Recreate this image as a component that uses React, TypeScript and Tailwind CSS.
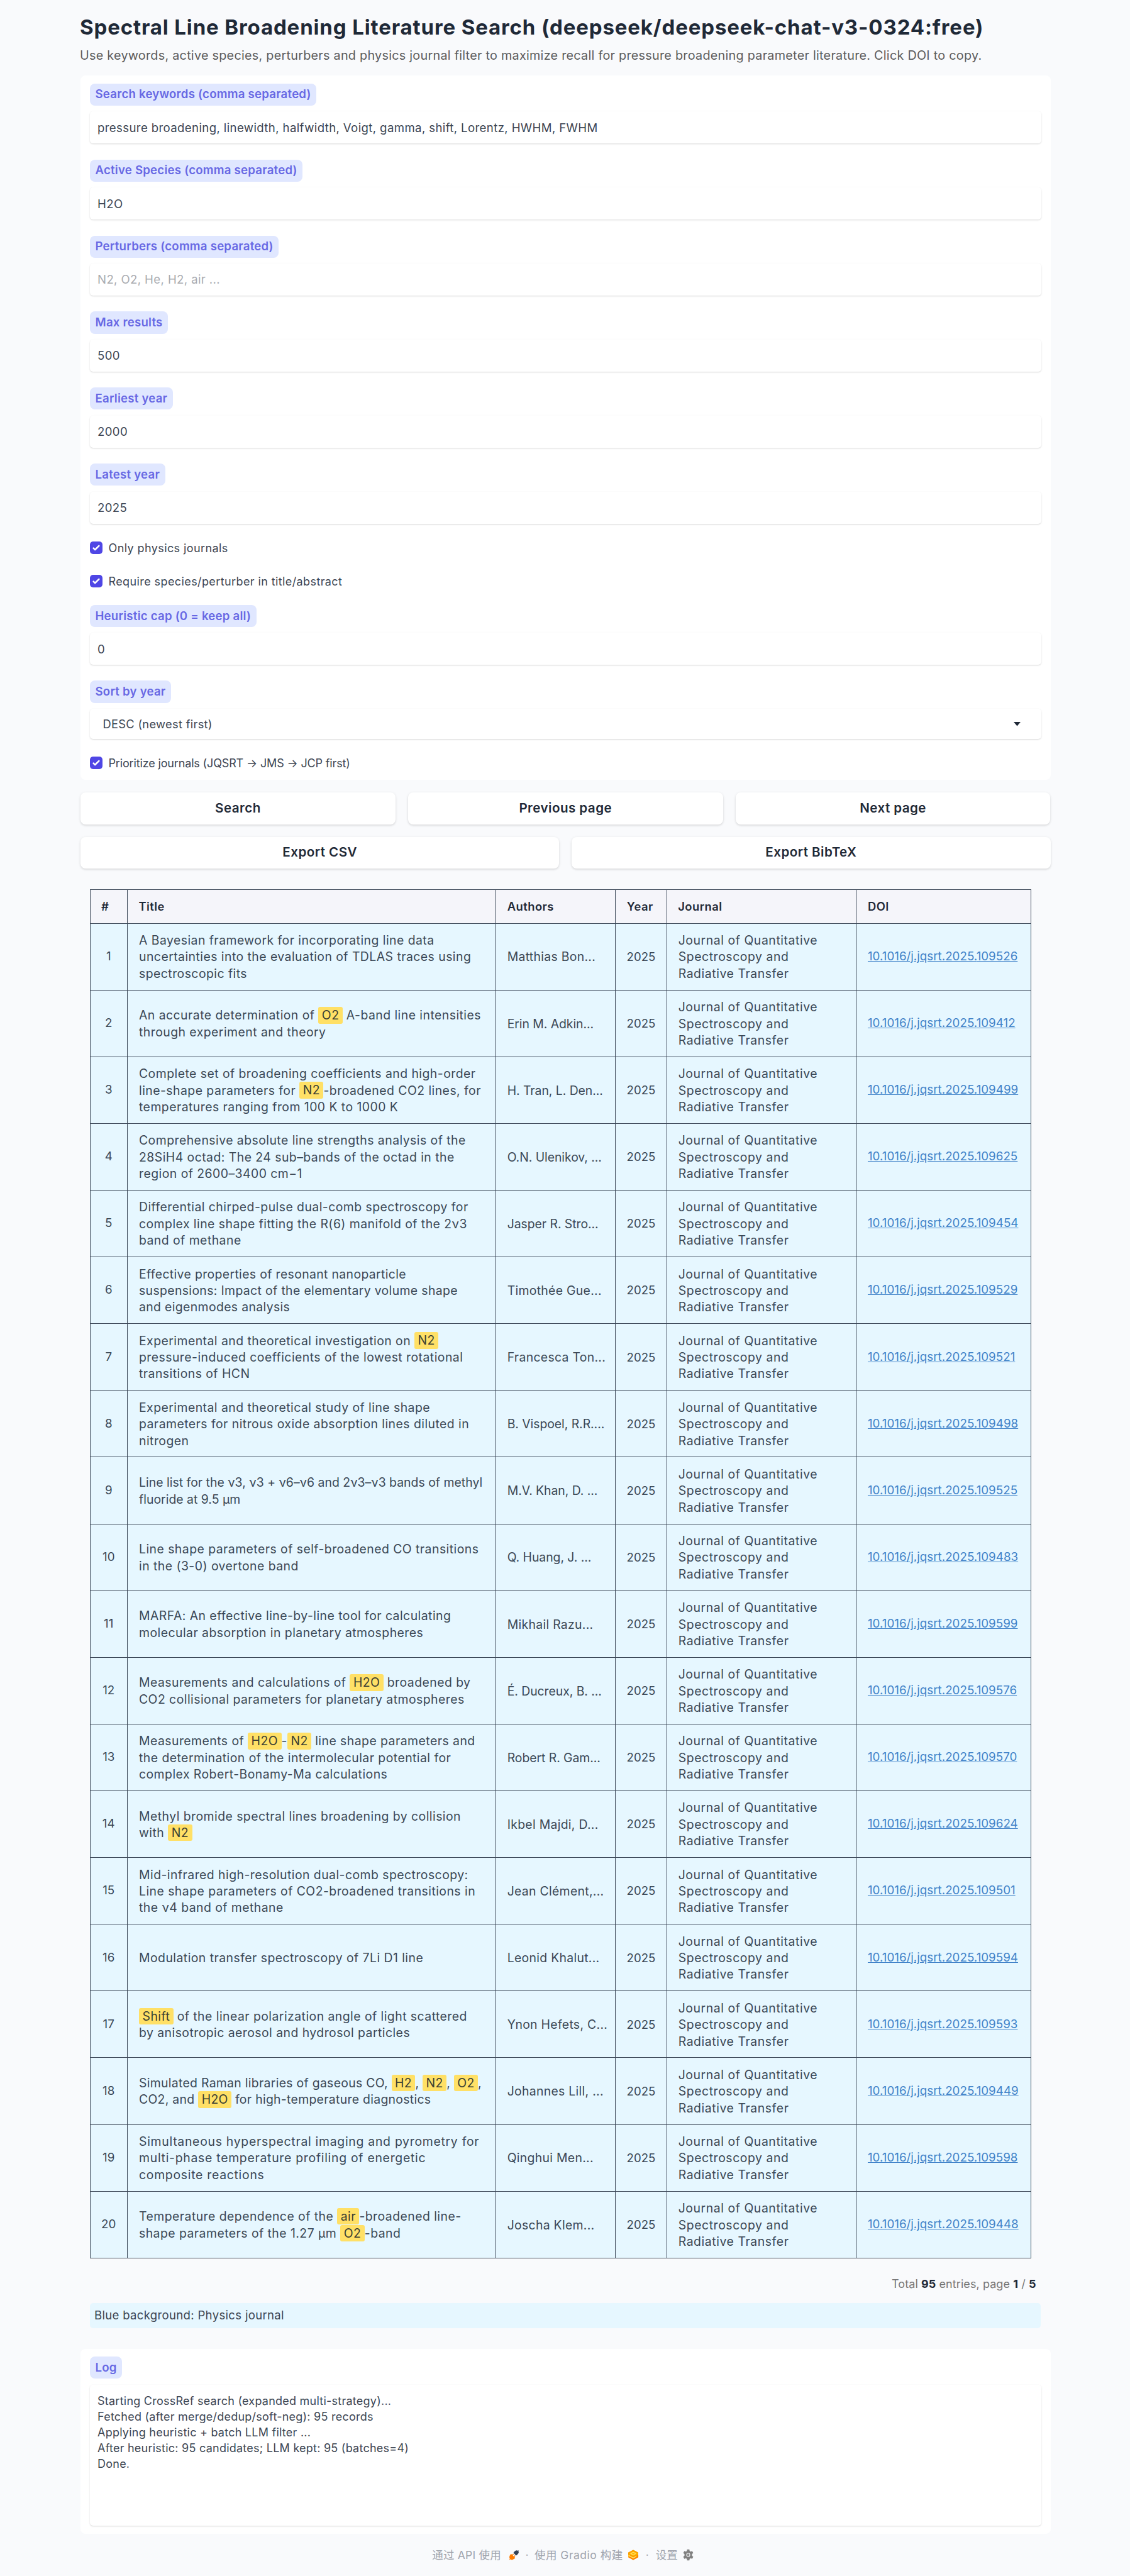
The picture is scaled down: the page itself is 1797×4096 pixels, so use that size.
import React from "react";

const ROWS: [string[], string, string][] = [
  [["A Bayesian framework for incorporating line data", "uncertainties into the evaluation of TDLAS traces using", "spectroscopic fits"], "Matthias Bon...", "109526"],
  [["An accurate determination of [O2] A-band line intensities", "through experiment and theory"], "Erin M. Adkin...", "109412"],
  [["Complete set of broadening coefficients and high-order", "line-shape parameters for [N2]-broadened CO2 lines, for", "temperatures ranging from 100 K to 1000 K"], "H. Tran, L. Den...", "109499"],
  [["Comprehensive absolute line strengths analysis of the", "28SiH4 octad: The 24 sub–bands of the octad in the", "region of 2600–3400 cm−1"], "O.N. Ulenikov, ...", "109625"],
  [["Differential chirped-pulse dual-comb spectroscopy for", "complex line shape fitting the R(6) manifold of the 2ν3", "band of methane"], "Jasper R. Stro...", "109454"],
  [["Effective properties of resonant nanoparticle", "suspensions: Impact of the elementary volume shape", "and eigenmodes analysis"], "Timothée Gue...", "109529"],
  [["Experimental and theoretical investigation on [N2]", "pressure-induced coefficients of the lowest rotational", "transitions of HCN"], "Francesca Ton...", "109521"],
  [["Experimental and theoretical study of line shape", "parameters for nitrous oxide absorption lines diluted in", "nitrogen"], "B. Vispoel, R.R....", "109498"],
  [["Line list for the ν3, ν3 + ν6–ν6 and 2ν3–ν3 bands of methyl", "fluoride at 9.5 μm"], "M.V. Khan, D. ...", "109525"],
  [["Line shape parameters of self-broadened CO transitions", "in the (3-0) overtone band"], "Q. Huang, J. ...", "109483"],
  [["MARFA: An effective line-by-line tool for calculating", "molecular absorption in planetary atmospheres"], "Mikhail Razu...", "109599"],
  [["Measurements and calculations of [H2O] broadened by", "CO2 collisional parameters for planetary atmospheres"], "É. Ducreux, B. ...", "109576"],
  [["Measurements of [H2O]-[N2] line shape parameters and", "the determination of the intermolecular potential for", "complex Robert-Bonamy-Ma calculations"], "Robert R. Gam...", "109570"],
  [["Methyl bromide spectral lines broadening by collision", "with [N2]"], "Ikbel Majdi, D...", "109624"],
  [["Mid-infrared high-resolution dual-comb spectroscopy:", "Line shape parameters of CO2-broadened transitions in", "the ν4 band of methane"], "Jean Clément,...", "109501"],
  [["Modulation transfer spectroscopy of 7Li D1 line"], "Leonid Khalut...", "109594"],
  [["[Shift] of the linear polarization angle of light scattered", "by anisotropic aerosol and hydrosol particles"], "Ynon Hefets, C...", "109593"],
  [["Simulated Raman libraries of gaseous CO, [H2], [N2], [O2],", "CO2, and [H2O] for high-temperature diagnostics"], "Johannes Lill, ...", "109449"],
  [["Simultaneous hyperspectral imaging and pyrometry for", "multi-phase temperature profiling of energetic", "composite reactions"], "Qinghui Men...", "109598"],
  [["Temperature dependence of the [air]-broadened line-", "shape parameters of the 1.27 μm [O2]-band"], "Joscha Klem...", "109448"],
];

const TITLE_TRACKING: Record<string, string> = {
  "109525": "tracking-[0.02px]",
  "109598": "tracking-[0.72px]",
  "109449": "tracking-[0.3px]",
  "109529": "tracking-[0.36px]",
};

const GRID = "grid grid-cols-[59.5px_586.2px_190px_81.5px_301.8px_277.5px]";
const CELL = "flex items-center border-r border-b border-[#3b4757] whitespace-nowrap";

function Marked({ text }: { text: string }) {
  return (
    <>
      {text.split(/(\[[^\]]+\])/).map((part, i) =>
        part.startsWith("[") ? (
          <mark key={i} className="rounded-[3px] bg-[#ffe066] px-[5.5px] py-[1.2px] text-[#3b3f33]">
            {part.slice(1, -1)}
          </mark>
        ) : (
          <span key={i}>{part}</span>
        ),
      )}
    </>
  );
}

function Label({ children }: { children: React.ReactNode }) {
  return (
    <div className="flex h-[35.2px] w-fit items-center rounded-lg bg-[#e0e7ff] px-[8.5px] text-[18.6px] font-semibold tracking-[0.24px] whitespace-nowrap text-[#6768e4]">
      {children}
    </div>
  );
}

const BOX = "rounded-[5px] bg-white shadow-[0_1px_3px_rgba(0,0,0,0.1),0_1px_2px_rgba(0,0,0,0.06)]";

function Field({ label, value, muted }: { label: string; value: string; muted?: boolean }) {
  return (
    <div>
      <Label>{label}</Label>
      <div className={`${BOX} mt-[9.2px] flex h-[51px] items-center px-[12px] pt-[2px] text-[18.6px] tracking-[0.38px] ${muted ? "text-[#a9abb0]" : "text-[#3d4653]"}`}>
        {value}
      </div>
    </div>
  );
}

function Check({ children, tight }: { children: React.ReactNode; tight?: boolean }) {
  return (
    <div className={`flex h-5 items-center gap-[9.5px] text-[18px] text-[#3d4653] ${tight ? "tracking-[-0.15px]" : "tracking-[0.4px]"}`}>
      <span className="flex size-5 items-center justify-center rounded-[5px] bg-[#4f46e5]">
        <svg viewBox="0 0 16 16" className="size-5" fill="white">
          <path d="M12.207 4.793a1 1 0 010 1.414l-5 5a1 1 0 01-1.414 0l-2-2a1 1 0 011.414-1.414L6.5 9.086l4.293-4.293a1 1 0 011.414 0z" />
        </svg>
      </span>
      <span className="pt-[1px] whitespace-nowrap">{children}</span>
    </div>
  );
}

function Button({ children }: { children: React.ReactNode }) {
  return (
    <button className="flex h-[50.6px] flex-1 items-center justify-center rounded-lg bg-white text-[20.6px] font-semibold tracking-[0.45px] text-[#1f2937] shadow-[0_1px_4px_rgba(0,0,0,0.1),0_2px_3px_rgba(0,0,0,0.06)]">
      {children}
    </button>
  );
}

function ApiIcon() {
  return (
    <svg viewBox="0 0 28 28" className="size-[17px]">
      <path d="M27 1 L24.5 3.2 C20 0.5 16 3.5 12.2 8.6 L19.4 15.8 C24.5 12 28 8 25.2 4.2 Z" fill="#334155" />
      <path d="M1 27 L3 24 C0 19.5 2.8 15 6 11 L9 13.6 L11.5 10.6 L13.4 12.4 L10.8 15.4 L13 17.8 L15.8 14.8 L17.6 16.6 L14.8 19.5 L17 21.8 C13 26 8.5 28 4.3 25.5 Z" fill="#ff7c00" />
    </svg>
  );
}

function GradioIcon() {
  return (
    <svg viewBox="0 0 28 28" className="h-[17px] w-[18px]" fill="none" strokeLinejoin="round">
      <path d="M14 1 L27 8 V20 L14 27 L1 20 V8 Z" fill="#ffb300" />
      <path d="M26 8.5 L14 2.2 L2 8.5 V12 L14 18.5 L26 12.5" stroke="#f99b00" strokeWidth="2.4" />
      <path d="M2 19 L14 25.5 L26 19 V15" stroke="#ff7c00" strokeWidth="2.6" />
      <path d="M14 7 L20.5 10.5 L14 14 L7.5 10.5 Z" stroke="#ffdf66" strokeWidth="2" />
      <path d="M2 15.5 L14 21.8 L21 18" stroke="#ffe27a" strokeWidth="2" />
    </svg>
  );
}

function GearIcon() {
  return (
    <svg viewBox="0 0 24 24" className="size-[19px]" fill="#808080">
      <path
        fillRule="evenodd"
        d="M9.7 1h4.6l.5 3.2 2 1.1 3-1.2 2.3 4-2.5 2v3.4l2.5 2.4-2.3 4-3-1.2-2 1.1-.5 3.2H9.7l-.5-3.2-2-1.1-3 1.2-2.3-4 2.5-2.4v-3.4l-2.5-2 2.3-4 3 1.2 2-1.1zM12 8a3.9 3.9 0 100 7.8 3.9 3.9 0 000-7.8z"
      />
      <circle cx="12" cy="11.9" r="2.6" fill="#8e8e8e" />
    </svg>
  );
}

export default function App() {
  return (
    <div className="h-[4096px] w-[1797px] overflow-hidden bg-[#f9fafc] px-[128px] font-['Inter','Noto_Sans_CJK_SC',sans-serif]">
      <header className="h-[120px] pt-[21px] whitespace-nowrap">
        <h1 className="-ml-px text-[33px] leading-[44px] font-bold tracking-[0.87px] text-[#1f2937]">
          Spectral Line Broadening Literature Search (deepseek/deepseek-chat-v3-0324:free)
        </h1>
        <p className="mt-[8.5px] -ml-px text-[19.8px] leading-[28px] tracking-[0.26px] text-[#5c5c5c]">
          Use keywords, active species, perturbers and physics journal filter to maximize recall for pressure broadening parameter literature. Click DOI to copy.
        </p>
      </header>

      <section className="h-[1120px] w-[1542.5px] rounded-lg bg-white px-[15px] pt-[12.8px]">
        <div className="flex flex-col gap-[25.5px]">
          <Field label="Search keywords (comma separated)" value="pressure broadening, linewidth, halfwidth, Voigt, gamma, shift, Lorentz, HWHM, FWHM" />
          <Field label="Active Species (comma separated)" value="H2O" />
          <Field label="Perturbers (comma separated)" value="N2, O2, He, H2, air ..." muted />
          <Field label="Max results" value="500" />
          <Field label="Earliest year" value="2000" />
          <Field label="Latest year" value="2025" />
        </div>
        <div className="mt-[28.5px] mb-[28.5px] flex flex-col gap-[32.5px]">
          <Check>Only physics journals</Check>
          <Check>Require species/perturber in title/abstract</Check>
        </div>
        <Field label="Heuristic cap (0 = keep all)" value="0" />
        <div className="mt-[25px]">
          <Label>Sort by year</Label>
          <div className={`${BOX} mt-[9.8px] mb-[28.5px] flex h-[47.2px] items-center justify-between pt-[1px] pr-[33px] pl-[20.5px] text-[18.3px] tracking-[0.3px] text-[#3d4653]`}>
            <span>DESC (newest first)</span>
            <svg viewBox="0 0 10 6" className="h-[6.5px] w-[11px]" fill="#1f2937">
              <path d="M0 0h10L5 6z" />
            </svg>
          </div>
        </div>
        <Check tight>Prioritize journals (JQSRT → JMS → JCP first)</Check>
      </section>

      <div className="mt-[20px] flex w-[1542.5px] flex-col gap-[20px]">
        <div className="flex gap-[20px]">
          <Button>Search</Button>
          <Button>Previous page</Button>
          <Button>Next page</Button>
        </div>
        <div className="flex gap-[20px]">
          <Button>Export CSV</Button>
          <Button>Export BibTeX</Button>
        </div>
      </div>

      <div className="mt-[32.8px] ml-[14.5px] w-[1497.5px] border-t border-l border-[#3b4757] text-[19.4px] leading-[26.4px] text-[#3b4856]">
        <div className={`${GRID} h-[53.6px] bg-[#f5f5fa] text-[18.4px] font-semibold tracking-[0.45px] text-[#1f2937]`}>
          {["#", "Title", "Authors", "Year", "Journal", "DOI"].map((h) => (
            <div key={h} className={`${CELL} pl-[17.5px]`}>{h}</div>
          ))}
        </div>
        {ROWS.map(([title, authors, doi], i) => (
          <div key={doi} className={`${GRID} h-[106.11px] bg-[#e6f7ff]`}>
            <div className={`${CELL} justify-center text-[18.8px]`}>{i + 1}</div>
            <div className={`${CELL} pt-px pl-[18px] ${TITLE_TRACKING[doi] ?? "tracking-[0.46px]"}`}>
              <div>
                {title.map((line) => (
                  <div key={line}>
                    <Marked text={line} />
                  </div>
                ))}
              </div>
            </div>
            <div className={`${CELL} pt-px pl-[17.5px] ${/\.[ A-Z]/.test(authors) ? "tracking-[-0.05px]" : "tracking-[0.3px]"}`}>{authors}</div>
            <div className={`${CELL} justify-center text-[18.6px]`}>2025</div>
            <div className={`${CELL} pt-px pl-[18px] tracking-[0.57px]`}>
              <div>
                <div>Journal of Quantitative</div>
                <div>Spectroscopy and</div>
                <div>Radiative Transfer</div>
              </div>
            </div>
            <div className={`${CELL} pl-[17.5px] text-[18.8px]`}>
              <a className="text-[#4183c9] underline">10.1016/j.jqsrt.2025.{doi}</a>
            </div>
          </div>
        ))}
      </div>

      <div className="mr-[21.5px] mt-[27px] flex h-[28px] items-center justify-end text-[18px] tracking-[0.08px] whitespace-pre text-[#777777]">
        Total <b className="text-[#1f2937]">95</b> entries, page <b className="text-[#1f2937]">1</b> / <b className="text-[#1f2937]">5</b>
      </div>

      <div className="mt-[16px] ml-[15px] flex h-[40.5px] w-[1512px] items-center rounded-[5px] bg-[#e6f7ff] px-[7px] text-[18.6px] tracking-[0.3px] text-[#3d4653]">
        Blue background: Physics journal
      </div>

      <section className="mt-[32.5px] h-[294px] w-[1542.5px] rounded-lg bg-white px-[15px] pt-[12.5px]">
        <Label>Log</Label>
        <div className={`${BOX} mt-[9.5px] h-[224px] px-[12px] pt-[14px] text-[18px] leading-[24.95px] tracking-[0.24px] text-[#3d4653]`}>
          <div>Starting CrossRef search (expanded multi-strategy)...</div>
          <div>Fetched (after merge/dedup/soft-neg): 95 records</div>
          <div>Applying heuristic + batch LLM filter ...</div>
          <div>After heuristic: 95 candidates; LLM kept: 95 (batches=4)</div>
          <div>Done.</div>
        </div>
      </section>

      <footer className="mt-[19px] flex h-[30px] w-[1535px] items-center justify-center text-[17.5px] whitespace-nowrap text-[#a0a4ad]">
        <span className="tracking-[0.2px]">通过 API 使用</span>
        <span className="ml-[12px]"><ApiIcon /></span>
        <span className="mx-[9.5px]">·</span>
        <span className="tracking-[0.5px]">使用 Gradio 构建</span>
        <span className="ml-[7px]"><GradioIcon /></span>
        <span className="mx-[11px]">·</span>
        <span>设置</span>
        <span className="ml-[7px]"><GearIcon /></span>
      </footer>
    </div>
  );
}
